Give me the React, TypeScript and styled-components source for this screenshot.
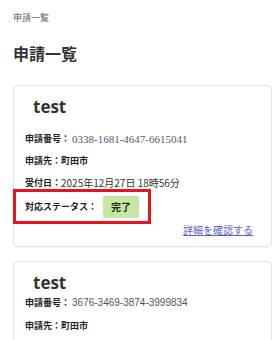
import styled, { createGlobalStyle } from 'styled-components';

interface Application {
  title: string;
  number: string;
  destination: string;
  receivedAt?: string;
  status?: string;
  serifNumber?: boolean;
}

const GlobalStyle = createGlobalStyle`
  body {
    margin: 0;
    background: #fff;
    font-family: "Noto Sans CJK JP", "Liberation Sans", sans-serif;
    color: #222;
    overflow: hidden;
  }
`;

const Page = styled.div`
  width: 275px;
  height: 340px;
  padding: 11px 3px 0 13px;
  box-sizing: border-box;
  overflow: hidden;
`;

const Breadcrumb = styled.div`
  font-size: 9px;
  color: #666;
  line-height: 14px;
`;

const Heading = styled.h1`
  margin: 17px 0 0;
  font-size: 16px;
  font-weight: 700;
  line-height: 22px;
  color: #333;
`;

const CardList = styled.div`
  display: flex;
  flex-direction: column;
  gap: 14px;
  margin-top: 21px;
`;

const Card = styled.div<{ $bottom: number }>`
  border: 1px solid #e4e4e4;
  border-radius: 4px;
  padding: 10px 12px ${(p) => p.$bottom}px 11px;
  box-shadow: 0 1px 2px rgba(0, 0, 0, 0.04);
  background: #fff;
`;

const Title = styled.div`
  padding-left: 8px;
  font-family: "Open Sans", "Liberation Sans", sans-serif;
  font-size: 17px;
  font-weight: 700;
  line-height: 22px;
  color: #333;
`;

const Row = styled.div<{ $gap?: number }>`
  display: flex;
  align-items: center;
  margin-top: ${(p) => p.$gap ?? 8}px;
  font-size: 9px;
  font-weight: 700;
  line-height: 14px;
  color: #222;
`;

const Value = styled.span<{ $serif?: boolean }>`
  font-family: ${(p) =>
    p.$serif ? '"Liberation Serif", serif' : '"Liberation Sans", "Noto Sans CJK JP", sans-serif'};
  font-size: ${(p) => (p.$serif ? 11 : 10)}px;
  font-weight: 400;
  color: ${(p) => (p.$serif ? '#5d5572' : '#555')};
  margin-left: 2px;
`;

const Plain = styled.span`
  font-weight: 400;
  font-size: 10px;
  color: #333;
`;

const Highlight = styled.div`
  display: flex;
  align-items: center;
  margin: -1px 0 0 -12px;
  width: 138px;
  height: 35px;
  box-sizing: border-box;
  border: 3px solid #e8141c;
  padding-left: 9px;
  font-size: 9px;
  font-weight: 700;
  color: #222;
`;

const Badge = styled.span`
  display: inline-flex;
  align-items: center;
  justify-content: center;
  margin-left: 6px;
  width: 36px;
  height: 22px;
  background: #c6e8a4;
  color: #1f2a14;
  font-size: 10px;
  font-weight: 700;
`;

const Footer = styled.div`
  display: flex;
  justify-content: flex-end;
  margin-top: -2px;
  padding-right: 6px;
`;

const DetailLink = styled.a`
  font-size: 10px;
  color: #5b5fc7;
  text-decoration: underline;
  cursor: pointer;
`;

const applications: Application[] = [
  {
    title: 'test',
    number: '0338-1681-4647-6615041',
    destination: '町田市',
    receivedAt: '2025年12月27日 18時56分',
    status: '完了',
    serifNumber: true,
  },
  {
    title: 'test',
    number: '3676-3469-3874-3999834',
    destination: '町田市',
  },
];

const App = () => {
  return (
    <Page>
      <GlobalStyle />
      <Breadcrumb>申請一覧</Breadcrumb>
      <Heading>申請一覧</Heading>
      <CardList>
        {applications.map((app, index) => (
          <Card key={index} $bottom={app.status ? 9 : 12}>
            <Title>{app.title}</Title>
            <Row $gap={app.serifNumber ? 14 : 2}>
              申請番号：<Value $serif={app.serifNumber}>{app.number}</Value>
            </Row>
            <Row $gap={app.serifNumber ? 8 : 9}>申請先：{app.destination}</Row>
            {app.receivedAt && (
              <Row>
                受付日：<Plain>{app.receivedAt}</Plain>
              </Row>
            )}
            {app.status && (
              <Highlight>
                対応ステータス：<Badge>{app.status}</Badge>
              </Highlight>
            )}
            {app.status && (
              <Footer>
                <DetailLink>詳細を確認する</DetailLink>
              </Footer>
            )}
          </Card>
        ))}
      </CardList>
    </Page>
  );
};

export default App;
